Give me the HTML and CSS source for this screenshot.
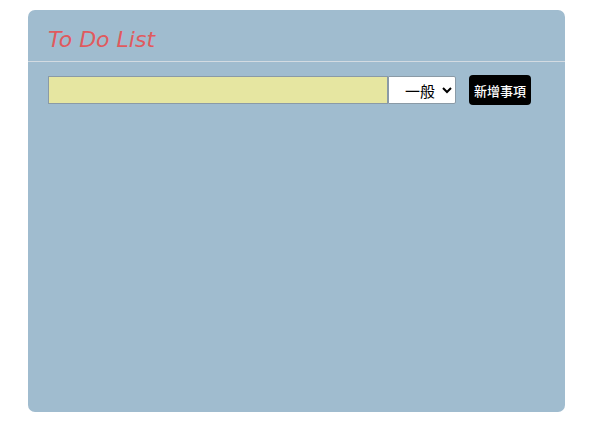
FILE: index.html
```html
<!DOCTYPE html>
<html lang="zh-Hant">
<head>
<meta charset="utf-8">
<title>To Do List</title>
<link rel="stylesheet" href="styles.css">
</head>
<body>
<div class="card">
  <div class="header">
    <h1 class="title">To Do List</h1>
  </div>
  <form class="add-row">
    <input class="task-input" type="text" autofocus>
    <select class="category">
      <option>一般</option>
      <option>工作</option>
      <option>生活</option>
    </select>
    <button class="add-btn" type="button">新增事項</button>
  </form>
</div>
</body>
</html>
```
FILE: styles.css
```css
html, body {
  margin: 0;
  background: #ffffff;
}
body {
  padding: 10px 35px 20px 28px;
  font-family: "Noto Sans CJK TC", "Noto Sans", sans-serif;
}
.card {
  background: #a0bccf;
  border-radius: 7px;
  height: 402px;
  box-sizing: border-box;
}
.header {
  height: 51px;
  border-bottom: 1px solid #d3dbe2;
  box-sizing: content-box;
  display: flex;
  align-items: center;
  padding: 0 20px;
}
.title {
  margin: 0;
  font-family: "DejaVu Sans", sans-serif;
  font-style: oblique;
  font-weight: normal;
  font-size: 22px;
  letter-spacing: 0;
  color: #e05a5e;
  padding-top: 7px;
}
.add-row {
  display: flex;
  align-items: center;
  margin: 13px 0 0 20px;
}
.task-input {
  width: 340px;
  height: 28px;
  box-sizing: border-box;
  margin: 0;
  border: 1px solid #8a9aa6;
  background: #e6e6a1;
  font-size: 15px;
  padding: 0 4px;
  outline: none;
}
.category {
  width: 68px;
  height: 28px;
  box-sizing: border-box;
  margin: 0;
  border: 1px solid #8a9aa6;
  border-radius: 0 2px 2px 0;
  background: #ffffff;
  font-family: "Noto Sans CJK TC", sans-serif;
  font-size: 15px;
  padding-left: 12px;
  color: #000;
}
.add-btn {
  margin-left: 13px;
  width: 62px;
  height: 30px;
  border: none;
  border-radius: 4px;
  background: #000000;
  color: #ffffff;
  font-family: "Noto Sans CJK TC", sans-serif;
  font-size: 13px;
  font-weight: 500;
  padding: 0;
  cursor: pointer;
}
```
